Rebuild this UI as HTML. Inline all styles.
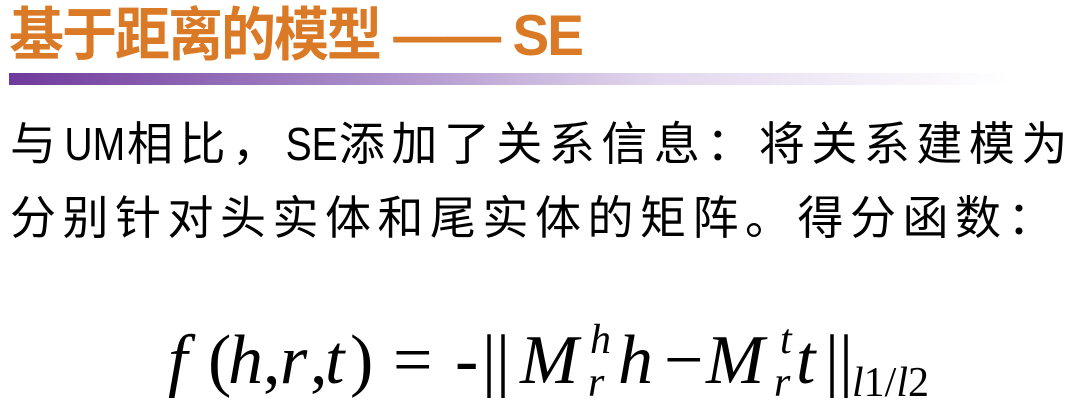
<!DOCTYPE html>
<html><head><meta charset="utf-8"><style>
body{margin:0;width:1083px;height:415px;background:#fff;position:relative;overflow:hidden}
.t{position:absolute;left:9px;top:-12px;font:bold 55px "Liberation Sans","Noto Sans CJK SC",sans-serif;color:#DA7A26;white-space:nowrap;letter-spacing:-2px;transform:scaleY(1.05);transform-origin:top left}
.bar{position:absolute;left:9px;top:73px;width:1000px;height:12px;background:linear-gradient(to right,#6f3a9c,#a98bc8 35%,#e3d8ee 65%,#fff)}
.l{position:absolute;left:10px;font:46px "Noto Sans CJK SC",sans-serif;color:#000;letter-spacing:6.5px;white-space:nowrap;line-height:1}
.l b{font-weight:normal;letter-spacing:0;font-family:"Liberation Sans",sans-serif;display:inline-block;transform:scaleX(0.85);margin:0 -3px 0 -4px}
.m{position:absolute;font-family:"Liberation Serif",serif;font-style:italic;color:#000;white-space:nowrap;line-height:1}
.n{font-style:normal}
</style></head><body>
<div class="t">基于距离的模型 —— SE</div>
<div class="bar"></div>
<div class="l" style="top:118px">与<b>UM</b>相比，<b>SE</b>添加了关系信息：将关系建模为</div>
<div class="l" style="top:192px">分别针对头实体和尾实体的矩阵。得分函数：</div>
<div class="m" style="left:168px;top:326px;font-size:70px">f</div>
<div class="m n" style="left:208px;top:326px;font-size:70px">(</div>
<div class="m" style="left:228px;top:326px;font-size:70px">h</div>
<div class="m n" style="left:263px;top:326px;font-size:70px">,</div>
<div class="m" style="left:280px;top:326px;font-size:70px">r</div>
<div class="m n" style="left:310px;top:326px;font-size:70px">,</div>
<div class="m" style="left:325px;top:326px;font-size:70px">t</div>
<div class="m n" style="left:350px;top:326px;font-size:70px">)</div>
<div class="m n" style="left:393px;top:326px;font-size:70px">=</div>
<div class="m n" style="left:455px;top:326px;font-size:70px">-</div>
<div class="m n" style="left:482px;top:326px;font-size:70px">||</div>
<div class="m" style="left:520px;top:326px;font-size:70px">M</div>
<div class="m" style="left:590px;top:319px;font-size:42px">h</div>
<div class="m" style="left:588px;top:362px;font-size:42px">r</div>
<div class="m" style="left:618px;top:326px;font-size:70px">h</div>
<div class="m n" style="left:664px;top:326px;font-size:70px">−</div>
<div class="m" style="left:706px;top:326px;font-size:70px">M</div>
<div class="m" style="left:780px;top:319px;font-size:42px">t</div>
<div class="m" style="left:774px;top:362px;font-size:42px">r</div>
<div class="m" style="left:796px;top:326px;font-size:70px">t</div>
<div class="m n" style="left:825px;top:326px;font-size:70px">||</div>
<div class="m" style="left:852px;top:362px;font-size:42px">l<span class="n">1/</span>l<span class="n">2</span></div>
</body></html>
